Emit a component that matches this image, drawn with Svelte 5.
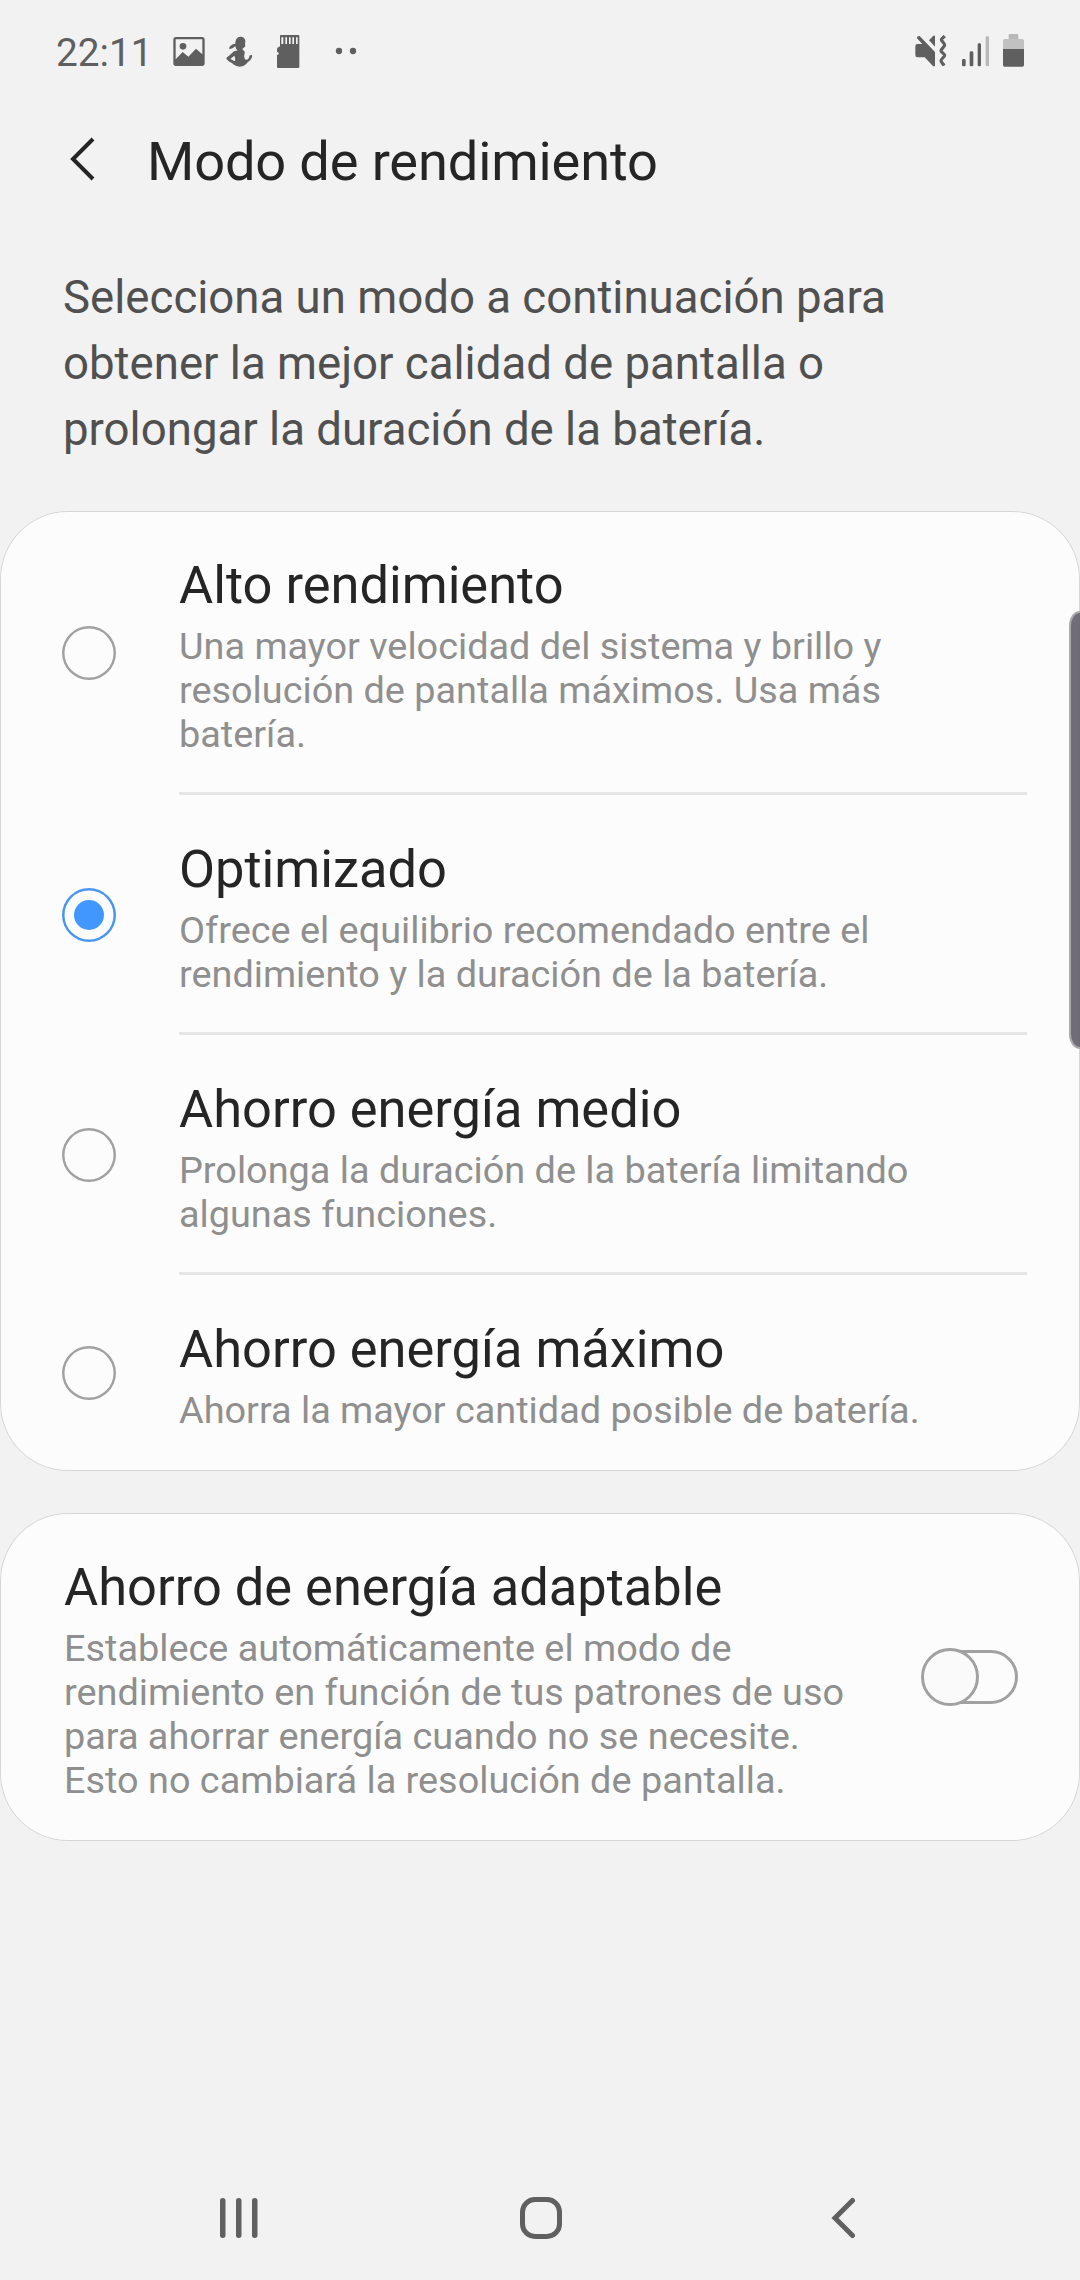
<script>
  let selected = $state(1);
  let adaptive = $state(false);

  const modes = [
    {
      title: 'Alto rendimiento',
      lines: ['Una mayor velocidad del sistema y brillo y', 'resolución de pantalla máximos. Usa más', 'batería.'],
    },
    {
      title: 'Optimizado',
      lines: ['Ofrece el equilibrio recomendado entre el', 'rendimiento y la duración de la batería.'],
    },
    {
      title: 'Ahorro energía medio',
      lines: ['Prolonga la duración de la batería limitando', 'algunas funciones.'],
    },
    {
      title: 'Ahorro energía máximo',
      lines: ['Ahorra la mayor cantidad posible de batería.'],
    },
  ];

  const intro = [
    'Selecciona un modo a continuación para',
    'obtener la mejor calidad de pantalla o',
    'prolongar la duración de la batería.',
  ];

  const adaptiveLines = [
    'Establece automáticamente el modo de',
    'rendimiento en función de tus patrones de uso',
    'para ahorrar energía cuando no se necesite.',
    'Esto no cambiará la resolución de pantalla.',
  ];
</script>

<div class="screen">
  <div class="status">
    <span class="time">22:11</span>
    <svg class="notifications" width="184" height="36" viewBox="399 42 552 108" fill="#5f5f5f">
      <!-- picture -->
      <path fill-rule="evenodd" d="M408 51h78q8 0 8 8v71q0 8-8 8h-78q-8 0-8-8V59q0-8 8-8zM407 58v60l21-22 17 14 23-24 19 17V58z" />
      <circle cx="429" cy="79" r="10" />
      <!-- figure -->
      <path fill-rule="evenodd" d="M601 50c9 0 15 6 15 14 0 4-1 6-1 8l1 7c-1 3-4 3-6 5-3 2-3 5 0 7 5 3 5 8 3 13-1 5 0 13 5 15 5 1 9-4 10-9-1-3 4-6 8-4 2 7-5 16-13 21-5 8-14 13-23 13-12 0-18-5-24-11-7-4-13-7-17-13 0-4 4-6 8-9l15-13c4-2 9-1 11-3-4-3-7-8-7-13-6 6-11 9-18 9-2-6 5-14 18-16 0-12 5-21 15-21zM583 107l-12 10 14 7c1-5 1-11-2-17z" />
      <!-- memory card -->
      <path fill-rule="evenodd" d="M722 45h53q3 0 3 3v93q0 3-3 3h-61q-3 0-3-3v-36l5-2v-5l-5-3v-8q0-4 9-8V48q0-3 2-3zM724 52v20h6V52zM736 52v20h5V52zM747 52v20h5V52zM757 52v20h5V52zM768 52v20h5V52z" />
      <circle cx="897" cy="93" r="9.5" />
      <circle cx="939" cy="93" r="9.5" />
    </svg>
    <svg class="system" width="110" height="36" viewBox="75 42 330 108" fill="#5f5f5f">
      <path d="M82 72h15L81 55q-1-7 8-7l46 48v42q-4 2-7-1l-24-25H82q-6 0-6-7V79q0-7 6-7z" />
      <path d="M117 61l13-14q5-2 5 2v31z" />
      <path d="M164 48c-4 5-10 7-10 11s10 11 10 16-11 12-11 17 11 9 11 14-11 11-11 16 6 8 9 15" fill="none" stroke="#5f5f5f" stroke-width="9.5" />
      <rect x="216" y="117" width="11" height="22" rx="4" />
      <rect x="239" y="94" width="11" height="45" rx="4" />
      <rect x="263" y="70" width="10" height="69" rx="4" />
      <rect x="287" y="49" width="10" height="90" rx="4" fill="#b8b8b8" />
      <path d="M356 57V46q0-4 4-4h21q4 0 4 4v11z" fill="#b8b8b8" />
      <path d="M339 87V62q0-5 5-5h53q5 0 5 5v25z" fill="#c1c1c1" />
      <path d="M339 87h63v48q0 5-5 5h-53q-5 0-5-5z" />
    </svg>
  </div>

  <header>
    <svg width="28" height="46" viewBox="0 0 28 46" fill="none" stroke="#252525" stroke-width="4">
      <path d="M25 3L5 23l20 20" />
    </svg>
    <h1>Modo de rendimiento</h1>
  </header>

  <p class="intro">
    {#each intro as line}<span>{line}</span>{/each}
  </p>

  <section class="card">
    {#each modes as mode, i}
      <div class="row" role="radio" tabindex="-1" aria-checked={selected === i} onclick={() => (selected = i)} onkeydown={() => (selected = i)}>
        <span class="radio" class:on={selected === i}></span>
        <div class="body">
          <h2>{mode.title}</h2>
          <p class="sub">{#each mode.lines as line}<span>{line}</span>{/each}</p>
        </div>
      </div>
    {/each}
  </section>

  <section class="card adaptive">
    <div class="text">
      <h2>Ahorro de energía adaptable</h2>
      <p class="sub">{#each adaptiveLines as line}<span>{line}</span>{/each}</p>
    </div>
    <button class="switch" class:on={adaptive} aria-label="Ahorro de energía adaptable" onclick={() => (adaptive = !adaptive)}>
      <span class="track"></span>
      <span class="thumb"></span>
    </button>
  </section>

  <nav>
    <svg width="40" height="44" viewBox="0 0 40 44" fill="#606060">
      <rect x="1" y="2" width="5.5" height="40" rx="2.7" />
      <rect x="17" y="2" width="5.5" height="40" rx="2.7" />
      <rect x="33" y="2" width="5.5" height="40" rx="2.7" />
    </svg>
    <svg class="home" width="44" height="44" viewBox="0 0 44 44" fill="none" stroke="#606060" stroke-width="5">
      <rect x="3.5" y="3.5" width="37" height="37" rx="12.5" />
    </svg>
    <svg width="26" height="44" viewBox="0 0 26 44" fill="none" stroke="#606060" stroke-width="5" stroke-linecap="round">
      <path d="M22.5 4.5L5 22l17.5 17.5" />
    </svg>
  </nav>

  <div class="edge-handle"></div>
</div>

<style>
  :global(body) {
    background: #f2f2f2;
  }
  .screen {
    position: relative;
    box-sizing: border-box;
    width: 1080px;
    height: 2280px;
    display: flex;
    flex-direction: column;
    overflow: hidden;
    background: #f2f2f2;
    color: #252525;
    font-family: Roboto, sans-serif;
  }
  h1, h2, p {
    margin: 0;
    font-weight: 400;
    white-space: nowrap;
  }
  svg {
    display: block;
    flex: none;
  }
  .status {
    display: flex;
    align-items: flex-start;
    height: 106px;
    padding: 34px 55px 0 56px;
    box-sizing: border-box;
    flex: none;
  }
  .time {
    width: 117px;
    font-size: 38.8px;
    line-height: 38px;
    color: #5f5f5f;
  }
  .system {
    margin-left: auto;
  }
  header {
    display: flex;
    align-items: center;
    height: 110px;
    padding-left: 68px;
    gap: 51px;
    flex: none;
  }
  header svg {
    margin-bottom: 4px;
  }
  h1 {
    margin-top: 2px;
    font-size: 54.2px;
    line-height: 66px;
    letter-spacing: -0.15px;
  }
  .intro {
    margin: 49px 0 48px 63px;
    font-size: 45.6px;
    line-height: 66px;
    color: #505050;
  }
  .intro span, .sub span {
    display: block;
  }
  .card {
    box-sizing: border-box;
    border-radius: 68px;
    background: #fcfcfc;
    box-shadow: inset 0 0 0 1px #d6d6d6;
    flex: none;
  }
  .row {
    display: flex;
    align-items: center;
    padding-left: 62px;
  }
  .radio {
    width: 54px;
    height: 54px;
    margin-right: 63px;
    box-shadow: inset 0 0 0 2.5px #a1a1a1;
    border-radius: 50%;
    display: grid;
    place-items: center;
    flex: none;
  }
  .radio.on {
    box-shadow: inset 0 0 0 2.5px #4a96ee;
  }
  .radio.on::after {
    content: '';
    width: 30px;
    height: 30px;
    border-radius: 50%;
    background: #4297ff;
  }
  .body {
    width: 848px;
    padding: 43px 0 36px;
    border-bottom: 3px solid #e5e5e5;
  }
  .row:last-child .body {
    border-color: transparent;
  }
  h2 {
    margin-bottom: 8px;
    font-size: 52.4px;
    line-height: 62px;
  }
  .sub {
    font-size: 37.85px;
    line-height: 44px;
    color: #8f8f8f;
  }
  .adaptive {
    display: flex;
    align-items: center;
    justify-content: space-between;
    margin-top: 42px;
    padding: 43px 62px 39px 64px;
  }
  .switch {
    display: grid;
    align-items: center;
    width: 97px;
    height: 58px;
    margin-bottom: 4px;
    padding: 0;
    border: 0;
    background: none;
  }
  .track, .thumb {
    grid-area: 1 / 1;
    box-sizing: border-box;
    border: 3px solid #a1a1a1;
  }
  .track {
    height: 54px;
    margin-left: 2px;
    border-radius: 27px;
  }
  .thumb {
    width: 58px;
    height: 58px;
    border-radius: 50%;
    background: #fafafa;
  }
  .switch.on .thumb {
    justify-self: end;
  }
  nav {
    display: flex;
    justify-content: space-between;
    align-items: center;
    height: 124px;
    margin-top: auto;
    padding: 0 224px 0 219px;
    flex: none;
  }
  .home {
    margin-right: 7px;
  }
  .edge-handle {
    position: absolute;
    box-sizing: border-box;
    top: 611px;
    right: 0;
    width: 11px;
    height: 438px;
    border: 2px solid #aaaaad;
    border-right: 0;
    border-radius: 12px 0 0 12px / 16px 0 0 16px;
    background: rgba(104, 101, 114, 0.95);
  }
</style>
